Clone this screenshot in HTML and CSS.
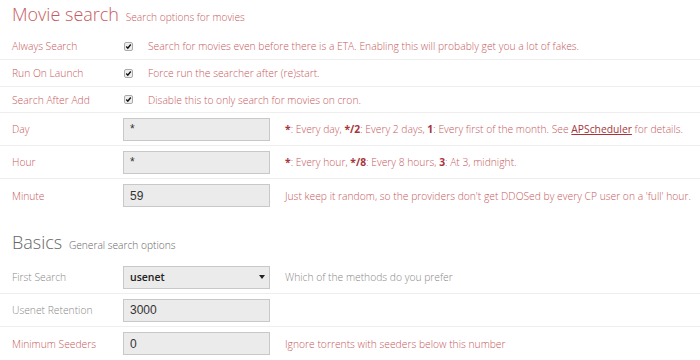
FILE: index.html
```html
<!DOCTYPE html>
<html lang="en">
<head>
  <meta charset="UTF-8" />
  <title>Settings – Searcher</title>
  <link rel="stylesheet" href="styles.css">
</head>
<body>
  <fieldset class="section">
    <h2>Movie search <span class="hint">Search options for movies</span></h2>

    <div class="row check">
      <label>Always Search</label>
      <span class="tick"><svg viewBox="0 0 9 9"><path d="M1.6 4.6 L3.6 6.6 L7.4 2" /></svg></span>
      <span class="desc">Search for movies even before there is a ETA. Enabling this will probably get you a lot of fakes.</span>
    </div>
    <div class="row check">
      <label>Run On Launch</label>
      <span class="tick"><svg viewBox="0 0 9 9"><path d="M1.6 4.6 L3.6 6.6 L7.4 2" /></svg></span>
      <span class="desc">Force run the searcher after (re)start.</span>
    </div>
    <div class="row check">
      <label>Search After Add</label>
      <span class="tick"><svg viewBox="0 0 9 9"><path d="M1.6 4.6 L3.6 6.6 L7.4 2" /></svg></span>
      <span class="desc">Disable this to only search for movies on cron.</span>
    </div>
    <div class="row">
      <label>Day</label>
      <input type="text" value="*">
      <span class="desc"><b>*</b>: Every day, <b>*/2</b>: Every 2 days, <b>1</b>: Every first of the month. See <a href="#">APScheduler</a> for details.</span>
    </div>
    <div class="row">
      <label>Hour</label>
      <input type="text" value="*">
      <span class="desc"><b>*</b>: Every hour, <b>*/8</b>: Every 8 hours, <b>3</b>: At 3, midnight.</span>
    </div>
    <div class="row last">
      <label>Minute</label>
      <input type="text" value="59">
      <span class="desc">Just keep it random, so the providers don't get DDOSed by every CP user on a 'full' hour.</span>
    </div>
  </fieldset>

  <fieldset class="section basics">
    <h2>Basics <span class="hint">General search options</span></h2>

    <div class="row">
      <label>First Search</label>
      <div class="select">usenet<span class="caret"></span></div>
      <span class="desc">Which of the methods do you prefer</span>
    </div>
    <div class="row">
      <label>Usenet Retention</label>
      <input type="text" value="3000">
    </div>
    <div class="row red last">
      <label>Minimum Seeders</label>
      <input type="text" value="0">
      <span class="desc">Ignore torrents with seeders below this number</span>
    </div>
  </fieldset>
</body>
</html>
```

FILE: styles.css
```css
body {
  margin: 0;
  background: #fff;
  font-family: 'Open Sans', sans-serif;
  font-weight: 300;
  font-size: 10.3px;
  color: #c65a60;
}
.section {
  border: none;
  margin: 0;
  padding: 0;
}
.section h2 {
  margin: 0;
  padding: 0 12px;
  height: 33px;
  box-sizing: border-box;
  font-size: 18px;
  line-height: 28px;
  font-weight: 300;
  white-space: nowrap;
}
.section .hint {
  font-size: 10.2px;
  line-height: 1;
  margin-left: 2px;
}
.basics {
  margin-top: 16px;
  color: #888;
}
.basics h2 {
  color: #666;
}
.basics .red {
  color: #c65a60;
}
.row {
  display: flex;
  align-items: center;
  height: 33px;
  padding-left: 12px;
  border-bottom: 1px solid #eee;
  box-sizing: border-box;
  white-space: nowrap;
}
.row.check {
  height: 27px;
}
.row.check:nth-of-type(3) {
  height: 26px;
}
.row.last {
  border-bottom: none;
}
.row label {
  width: 111px;
  flex: none;
}
.row input, .select {
  width: 147px;
  height: 23px;
  box-sizing: border-box;
  border: 1px solid #c8c8c8;
  background: #ebebeb;
  font-family: 'Liberation Sans', Arial, sans-serif;
  font-size: 12px;
  color: #333;
  padding: 0 6px;
  margin: 0;
  flex: none;
}
.select {
  display: flex;
  align-items: center;
  justify-content: space-between;
  font-family: 'Open Sans', sans-serif;
  font-size: 10.5px;
  font-weight: 600;
  color: #222;
  padding-right: 4px;
}
.caret {
  width: 0;
  height: 0;
  border-left: 3px solid transparent;
  border-right: 3px solid transparent;
  border-top: 4px solid #222;
}
.tick {
  width: 7px;
  height: 7px;
  margin-left: 1px;
  border: 1px solid #aaa;
  border-radius: 2px;
  background: #eee;
  display: flex;
}
.tick svg {
  width: 7px;
  height: 7px;
  fill: none;
  stroke: #111;
  stroke-width: 1.8;
}
.row .desc {
  margin-left: 15px;
}
.desc b {
  font-weight: 700;
  color: #a8343a;
}
.desc a {
  color: #a8343a;
  font-weight: 400;
}
```
